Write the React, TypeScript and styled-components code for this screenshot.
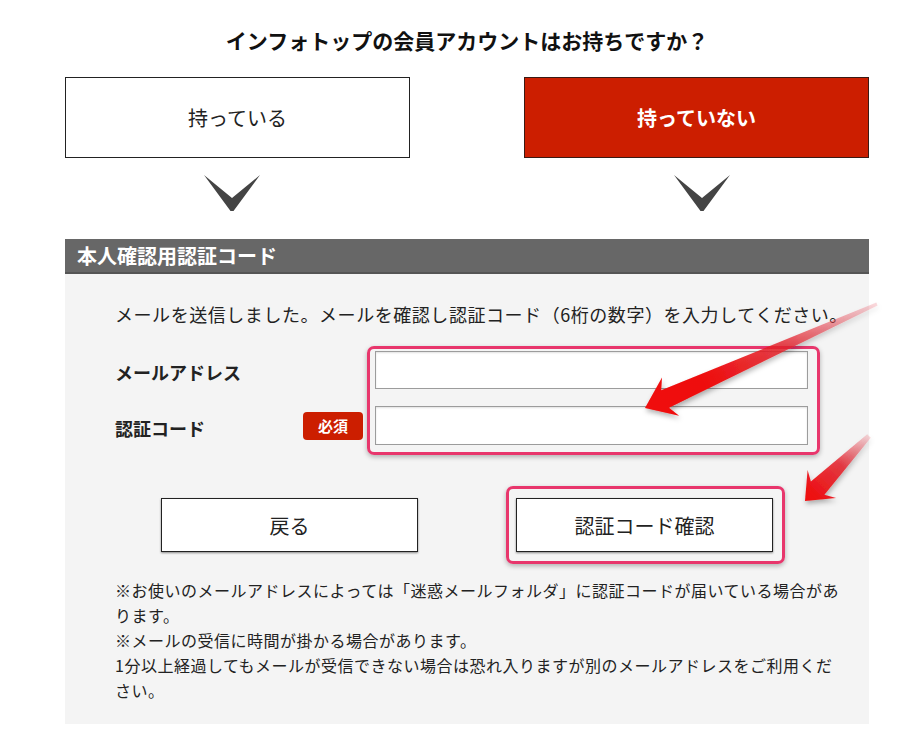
import React, { FC } from "react";
import styled, { createGlobalStyle } from "styled-components";

const GlobalStyle = createGlobalStyle`
  html, body {
    margin: 0;
    padding: 0;
    background: #fff;
  }
  body {
    font-family: "Noto Sans CJK JP", "Noto Sans", sans-serif;
    color: #222;
  }
`;

const Page = styled.div`
  position: relative;
  width: 920px;
  height: 756px;
  padding: 26px 0 0 65px;
  box-sizing: border-box;
  overflow: hidden;
`;

const Inner = styled.div`
  width: 804px;
`;

const Title = styled.h2`
  margin: 0;
  text-align: center;
  font-size: 21px;
  line-height: 28px;
  font-weight: 700;
  color: #111;
`;

const ChoiceRow = styled.div`
  display: grid;
  grid-template-columns: 345px 345px;
  justify-content: space-between;
  margin-top: 23px;
`;

const Choice = styled.div<{ $active?: boolean }>`
  height: 81px;
  box-sizing: border-box;
  display: flex;
  align-items: center;
  justify-content: center;
  font-size: 20px;
  font-weight: ${(p) => (p.$active ? 700 : 400)};
  color: ${(p) => (p.$active ? "#fff" : "#222")};
  background: ${(p) => (p.$active ? "#cc1e00" : "#fff")};
  border: 1px solid ${(p) => (p.$active ? "#3a1a14" : "#222")};
`;

const ChevronRow = styled.div`
  display: grid;
  grid-template-columns: 345px 345px;
  justify-content: space-between;
  margin-top: 17px;
`;

const ChevronCell = styled.div<{ $shift: number }>`
  display: flex;
  justify-content: center;
  padding-left: ${(p) => (p.$shift > 0 ? p.$shift : 0)}px;
  padding-right: ${(p) => (p.$shift < 0 ? -p.$shift : 0)}px;
  height: 36px;
`;

const SectionHeader = styled.div`
  margin-top: 28px;
  height: 35px;
  box-sizing: border-box;
  background: #676767;
  border-bottom: 2px solid #555;
  color: #fff;
  font-size: 20px;
  font-weight: 700;
  line-height: 33px;
  padding-left: 12px;
`;

const Panel = styled.div`
  background: #f4f4f4;
  height: 450px;
  box-sizing: border-box;
  padding: 27px 30px 0 50px;
`;

const Intro = styled.p`
  margin: 0;
  font-size: 18px;
  line-height: 26px;
  letter-spacing: 0.55px;
  white-space: nowrap;
`;

const FormArea = styled.div`
  display: flex;
  margin-top: 19px;
`;

const LabelColumn = styled.div`
  width: 252px;
  display: flex;
  flex-direction: column;
  gap: 17px;
  padding-top: 5px;
`;

const LabelRow = styled.div<{ $h: number }>`
  height: ${(p) => p.$h}px;
  display: flex;
  align-items: center;
  justify-content: space-between;
  padding-right: 4px;
`;

const Label = styled.span`
  font-size: 18px;
  font-weight: 700;
  padding-top: 4px;
`;

const Badge = styled.span`
  width: 60px;
  height: 28px;
  border-radius: 4px;
  background: #cc1e00;
  color: #fff;
  font-size: 15px;
  font-weight: 700;
  display: flex;
  align-items: center;
  justify-content: center;
`;

const Highlight = styled.div<{ $pad: string }>`
  border: 3px solid #e8366c;
  border-radius: 7px;
  padding: ${(p) => p.$pad};
  box-shadow: 0 2px 5px rgba(0, 0, 0, 0.28);
  display: flex;
  flex-direction: column;
  gap: 17px;
`;

const Input = styled.input<{ $h: number }>`
  width: 433px;
  height: ${(p) => p.$h}px;
  box-sizing: border-box;
  border: 1px solid #9c9c9c;
  background: #fff;
  box-shadow: inset 0 1px 2px rgba(0, 0, 0, 0.12);
  margin: 0;
  padding: 0 8px;
  font-size: 16px;
  outline: none;
`;

const ButtonRow = styled.div`
  display: flex;
  align-items: center;
  gap: 88px;
  margin-top: 31px;
  padding-left: 46px;
`;

const Button = styled.button`
  width: 257px;
  height: 54px;
  box-sizing: border-box;
  border: 1px solid #222;
  background: #fff;
  box-shadow: 0 1px 2px rgba(0, 0, 0, 0.45);
  font-family: inherit;
  font-size: 20px;
  color: #222;
  cursor: pointer;
`;

const Notes = styled.p`
  margin: 14px 0 0;
  font-size: 16px;
  line-height: 25px;
  letter-spacing: 0.5px;
  white-space: nowrap;
`;

const Overlay = styled.svg`
  position: absolute;
  left: 0;
  top: 0;
  pointer-events: none;
`;

const Chevron: FC = () => (
  <svg width="56" height="36" viewBox="0 0 56 36">
    <polygon points="0,0 28,23 56,0 29.5,36 26.5,36" fill="#444" />
  </svg>
);

type Pt = [number, number];

const arrowPoints = (
  tail: Pt,
  tip: Pt,
  headLen: number,
  headW: number,
  tailW: number,
  neckW: number
) => {
  const dx = tip[0] - tail[0];
  const dy = tip[1] - tail[1];
  const len = Math.hypot(dx, dy);
  const ux = dx / len;
  const uy = dy / len;
  const nx = -uy;
  const ny = ux;
  const bx = tip[0] - ux * headLen;
  const by = tip[1] - uy * headLen;
  const back = 6;
  const pts: Pt[] = [
    [tail[0] + (nx * tailW) / 2, tail[1] + (ny * tailW) / 2],
    [bx + (nx * neckW) / 2, by + (ny * neckW) / 2],
    [bx - ux * back + (nx * headW) / 2, by - uy * back + (ny * headW) / 2],
    tip,
    [bx - ux * back - (nx * headW) / 2, by - uy * back - (ny * headW) / 2],
    [bx - (nx * neckW) / 2, by - (ny * neckW) / 2],
    [tail[0] - (nx * tailW) / 2, tail[1] - (ny * tailW) / 2],
  ];
  return pts.map((p) => `${p[0].toFixed(1)},${p[1].toFixed(1)}`).join(" ");
};

const Arrows: FC = () => (
  <Overlay width="920" height="756" viewBox="0 0 920 756">
    <defs>
      <linearGradient id="a1" gradientUnits="userSpaceOnUse" x1="877" y1="304" x2="645" y2="408">
        <stop offset="0" stopColor="#e84a5a" stopOpacity="0.2" />
        <stop offset="0.4" stopColor="#e4202a" stopOpacity="0.8" />
        <stop offset="0.75" stopColor="#ee0a0a" stopOpacity="1" />
        <stop offset="1" stopColor="#f00808" stopOpacity="1" />
      </linearGradient>
      <linearGradient id="a2" gradientUnits="userSpaceOnUse" x1="869" y1="436" x2="805" y2="501">
        <stop offset="0" stopColor="#e84a5a" stopOpacity="0.2" />
        <stop offset="0.45" stopColor="#e4202a" stopOpacity="0.85" />
        <stop offset="1" stopColor="#f00808" stopOpacity="1" />
      </linearGradient>
      <filter id="sh" x="-20%" y="-20%" width="140%" height="140%">
        <feDropShadow dx="1" dy="3" stdDeviation="2.5" floodColor="#000" floodOpacity="0.3" />
      </filter>
    </defs>
    <polygon
      points={arrowPoints([877, 304], [645, 408], 22, 42, 3, 19)}
      fill="url(#a1)"
      filter="url(#sh)"
    />
    <polygon
      points={arrowPoints([869, 436], [805, 501], 18, 40, 5, 19)}
      fill="url(#a2)"
      filter="url(#sh)"
    />
  </Overlay>
);

export default function App() {
  return (
    <>
      <GlobalStyle />
      <Page>
        <Inner>
          <Title>インフォトップの会員アカウントはお持ちですか？</Title>
          <ChoiceRow>
            <Choice>持っている</Choice>
            <Choice $active>持っていない</Choice>
          </ChoiceRow>
          <ChevronRow>
            <ChevronCell $shift={-12}>
              <Chevron />
            </ChevronCell>
            <ChevronCell $shift={10}>
              <Chevron />
            </ChevronCell>
          </ChevronRow>
          <SectionHeader>本人確認用認証コード</SectionHeader>
          <Panel>
            <Intro>
              メールを送信しました。メールを確認し認証コード（6桁の数字）を入力してください。
            </Intro>
            <FormArea>
              <LabelColumn>
                <LabelRow $h={38}>
                  <Label>メールアドレス</Label>
                </LabelRow>
                <LabelRow $h={39}>
                  <Label>認証コード</Label>
                  <Badge>必須</Badge>
                </LabelRow>
              </LabelColumn>
              <Highlight $pad="2px 9px 7px 5px">
                <Input $h={38} type="text" />
                <Input $h={39} type="text" />
              </Highlight>
            </FormArea>
            <ButtonRow>
              <Button type="button">戻る</Button>
              <Highlight $pad="9px 9px 9px 7px">
                <Button type="button">認証コード確認</Button>
              </Highlight>
            </ButtonRow>
            <Notes>
              ※お使いのメールアドレスによっては「迷惑メールフォルダ」に認証コードが届いている場合があ
              <br />
              ります。
              <br />
              ※メールの受信に時間が掛かる場合があります。
              <br />
              1分以上経過してもメールが受信できない場合は恐れ入りますが別のメールアドレスをご利用くだ
              <br />
              さい。
            </Notes>
          </Panel>
        </Inner>
        <Arrows />
      </Page>
    </>
  );
}
